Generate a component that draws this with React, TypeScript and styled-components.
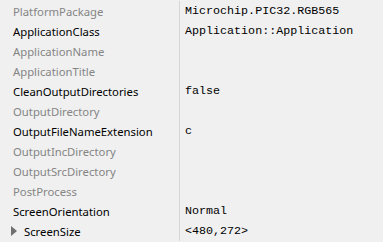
import React from "react";
import styled, { createGlobalStyle } from "styled-components";

const Global = createGlobalStyle`
  html, body {
    margin: 0;
    padding: 0;
    background: #f0f0f0;
  }
`;

type Prop = {
  name: string;
  value?: string;
  set?: boolean;
  expandable?: boolean;
};

const props: Prop[] = [
  { name: "PlatformPackage", value: "Microchip.PIC32.RGB565" },
  { name: "ApplicationClass", value: "Application::Application", set: true },
  { name: "ApplicationName" },
  { name: "ApplicationTitle" },
  { name: "CleanOutputDirectories", value: "false", set: true },
  { name: "OutputDirectory" },
  { name: "OutputFileNameExtension", value: "c", set: true },
  { name: "OutputIncDirectory" },
  { name: "OutputSrcDirectory" },
  { name: "PostProcess" },
  { name: "ScreenOrientation", value: "Normal", set: true },
  { name: "ScreenSize", value: "<480,272>", set: true, expandable: true },
];

const Grid = styled.div`
  width: 383px;
  height: 242px;
  background: #f0f0f0;
  padding-top: 1px;
  box-sizing: border-box;
  overflow: hidden;
`;

const Row = styled.div`
  display: grid;
  grid-template-columns: 179px 1px 1fr;
  height: 20px;
`;

const NameCell = styled.div<{ $set?: boolean }>`
  display: flex;
  align-items: center;
  padding-left: 13px;
  font-family: "Noto Sans", "Open Sans", sans-serif;
  font-size: 11.3px;
  color: ${(p) => (p.$set ? "#000000" : "#858585")};
  white-space: nowrap;
`;

const Divider = styled.div`
  background: #d6d6d6;
`;

const ValueCell = styled.div`
  display: flex;
  align-items: center;
  padding-left: 5px;
  font-family: "Liberation Mono", "DejaVu Sans Mono", monospace;
  font-size: 11.7px;
  color: #000000;
  white-space: pre;
`;

const Arrow = styled.span`
  width: 0;
  height: 0;
  border-top: 5px solid transparent;
  border-bottom: 5px solid transparent;
  border-left: 6px solid #6f6f6f;
  margin-left: -2px;
  margin-right: 7px;
`;

export default function App() {
  return (
    <>
      <Global />
      <Grid>
        {props.map((p) => (
          <Row key={p.name}>
            <NameCell $set={p.set}>
              {p.expandable && <Arrow />}
              {p.name}
            </NameCell>
            <Divider />
            <ValueCell>{p.value ?? ""}</ValueCell>
          </Row>
        ))}
      </Grid>
    </>
  );
}
